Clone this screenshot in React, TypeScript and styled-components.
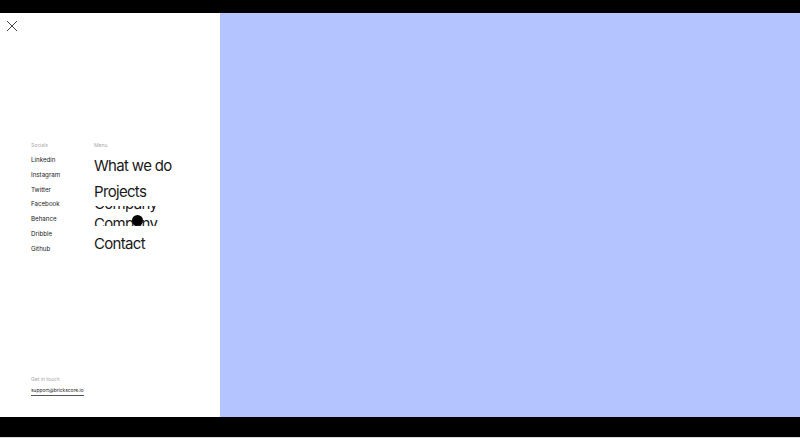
import React from "react";
import styled, { createGlobalStyle } from "styled-components";

const Global = createGlobalStyle`
  html, body { margin: 0; padding: 0; background: #000; }
  body { font-family: Inter, Roboto, "Noto Sans", sans-serif; -webkit-font-smoothing: antialiased; }
  * { box-sizing: border-box; }
`;

const Frame = styled.div`
  width: 800px;
  height: 438px;
  display: flex;
  flex-direction: column;
  background: #000;
`;

const BlackBar = styled.div<{ $h: number }>`
  height: ${(p) => p.$h}px;
  background: #000;
  flex: none;
`;

const EdgeLine = styled.div`
  height: 1px;
  background: #d9d9d9;
  flex: none;
`;

const Stage = styled.div`
  height: 404px;
  display: flex;
  flex: none;
`;

const Panel = styled.aside`
  width: 220px;
  background: #fff;
  display: flex;
  flex-direction: column;
  padding: 7px 0 21px 0;
`;

const Canvas = styled.main`
  flex: 1;
  background: #b4c4ff;
`;

const CloseButton = styled.button`
  width: 12px;
  height: 12px;
  margin-left: 6px;
  padding: 0;
  border: 0;
  background: transparent;
  display: flex;
  align-items: center;
  justify-content: center;
  cursor: pointer;
`;

const NavArea = styled.div`
  margin-top: 109px;
  padding-left: 31px;
  display: flex;
`;

const Column = styled.div<{ $w?: number }>`
  display: flex;
  flex-direction: column;
  width: ${(p) => (p.$w ? `${p.$w}px` : "auto")};
`;

const Label = styled.div`
  font-size: 5px;
  line-height: 8px;
  color: #a8a8a8;
  margin-bottom: 4px;
`;

const SocialLink = styled.a`
  font-size: 6.2px;
  line-height: 14.8px;
  color: #222;
  text-decoration: none;
`;

const MenuList = styled.div`
  display: flex;
  flex-direction: column;
`;

const MenuItem = styled.a`
  font-size: 15px;
  line-height: 26px;
  letter-spacing: -0.045em;
  color: #1a1a1a;
  text-decoration: none;
  white-space: nowrap;
`;

const RollingRow = styled.div`
  height: 26px;
  position: relative;
`;

const RollClip = styled.div`
  margin-top: 1px;
  height: 20px;
  overflow: hidden;
`;

const RollInner = styled.div`
  display: flex;
  flex-direction: column;
  transform: translateY(-12px);
`;

const RollLine = styled.span`
  font-size: 15px;
  line-height: 20px;
  letter-spacing: -0.045em;
  color: #1a1a1a;
  white-space: nowrap;
`;

const Cursor = styled.span`
  position: absolute;
  left: 38px;
  top: 10px;
  width: 11px;
  height: 11px;
  border-radius: 50%;
  background: #000;
  pointer-events: none;
`;

const Footer = styled.div`
  margin-top: auto;
  padding-left: 31px;
  display: flex;
  flex-direction: column;
  align-items: flex-start;
`;

const FooterLabel = styled.div`
  font-size: 5px;
  line-height: 8px;
  color: #a8a8a8;
  margin-bottom: 4px;
`;

const Mail = styled.a`
  font-size: 4.9px;
  line-height: 7px;
  color: #1a1a1a;
  text-decoration: none;
  border-bottom: 0.8px solid #555;
  padding-bottom: 1px;
`;

const socials = ["Linkedin", "Instagram", "Twitter", "Facebook", "Behance", "Dribble", "Github"];

export default function App() {
  return (
    <>
      <Global />
      <Frame>
        <BlackBar $h={13} />
        <Stage>
          <Panel>
            <CloseButton aria-label="Close">
              <svg width="12" height="12" viewBox="0 0 12 12">
                <path d="M1 1 L11 11 M11 1 L1 11" stroke="#444" strokeWidth="1" fill="none" />
              </svg>
            </CloseButton>
            <NavArea>
              <Column $w={63}>
                <Label>Socials</Label>
                {socials.map((s) => (
                  <SocialLink key={s} href="#">{s}</SocialLink>
                ))}
              </Column>
              <Column>
                <Label>Menu</Label>
                <MenuList>
                  <MenuItem href="#">What we do</MenuItem>
                  <MenuItem href="#">Projects</MenuItem>
                  <RollingRow>
                    <RollClip>
                      <RollInner>
                        <RollLine>Company</RollLine>
                        <RollLine>Company</RollLine>
                      </RollInner>
                    </RollClip>
                    <Cursor />
                  </RollingRow>
                  <MenuItem href="#">Contact</MenuItem>
                </MenuList>
              </Column>
            </NavArea>
            <Footer>
              <FooterLabel>Get in touch</FooterLabel>
              <Mail href="#">support@brickscore.io</Mail>
            </Footer>
          </Panel>
          <Canvas />
        </Stage>
        <BlackBar $h={20} />
        <EdgeLine />
      </Frame>
    </>
  );
}
